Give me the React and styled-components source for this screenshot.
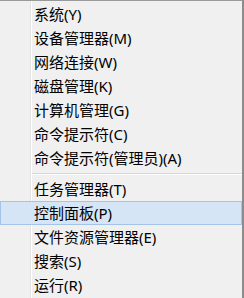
import React from 'react';
import styled, { createGlobalStyle } from 'styled-components';

const GlobalStyle = createGlobalStyle`
  html, body {
    margin: 0;
    padding: 0;
    background: #f0f0f0;
  }
  body {
    font-family: "Noto Sans", "Noto Sans CJK SC", sans-serif;
  }
`;

const Menu = styled.div`
  width: 244px;
  height: 298px;
  overflow: hidden;
  box-sizing: border-box;
  border-top: 1px solid #9a9a9a;
  border-right: 2px solid #8c8c8c;
  padding-top: 1px;
  background: linear-gradient(
    to right,
    #f0f0f0 30px,
    #e2e3e3 30px,
    #e2e3e3 31px,
    #ffffff 31px,
    #ffffff 32px,
    #f0f0f0 32px
  );
`;

const Item = styled.div`
  height: 24px;
  line-height: 24px;
  padding-left: 34px;
  font-size: 15px;
  color: #000;
  white-space: nowrap;
  box-sizing: border-box;
  ${(p) =>
    p.$active &&
    `
    background: #d5e5f6;
    border: 1px solid #a3c3e8;
    line-height: 22px;
    padding-left: 33px;
  `}
`;

const Separator = styled.div`
  height: 7px;
  margin-left: 32px;
  display: flex;
  flex-direction: column;
  justify-content: center;

  &::before {
    content: '';
    display: block;
    border-top: 1px solid #d7d7d7;
    border-bottom: 1px solid #ffffff;
  }
`;

const groups = [
  [
    '系统(Y)',
    '设备管理器(M)',
    '网络连接(W)',
    '磁盘管理(K)',
    '计算机管理(G)',
    '命令提示符(C)',
    '命令提示符(管理员)(A)',
  ],
  ['任务管理器(T)', '控制面板(P)', '文件资源管理器(E)', '搜索(S)', '运行(R)'],
];

export default function App() {
  return (
    <>
      <GlobalStyle />
      <Menu>
        {groups.map((items, gi) => (
          <React.Fragment key={gi}>
            {gi > 0 && <Separator />}
            {items.map((label) => (
              <Item key={label} $active={label === '控制面板(P)'}>
                {label}
              </Item>
            ))}
          </React.Fragment>
        ))}
      </Menu>
    </>
  );
}
